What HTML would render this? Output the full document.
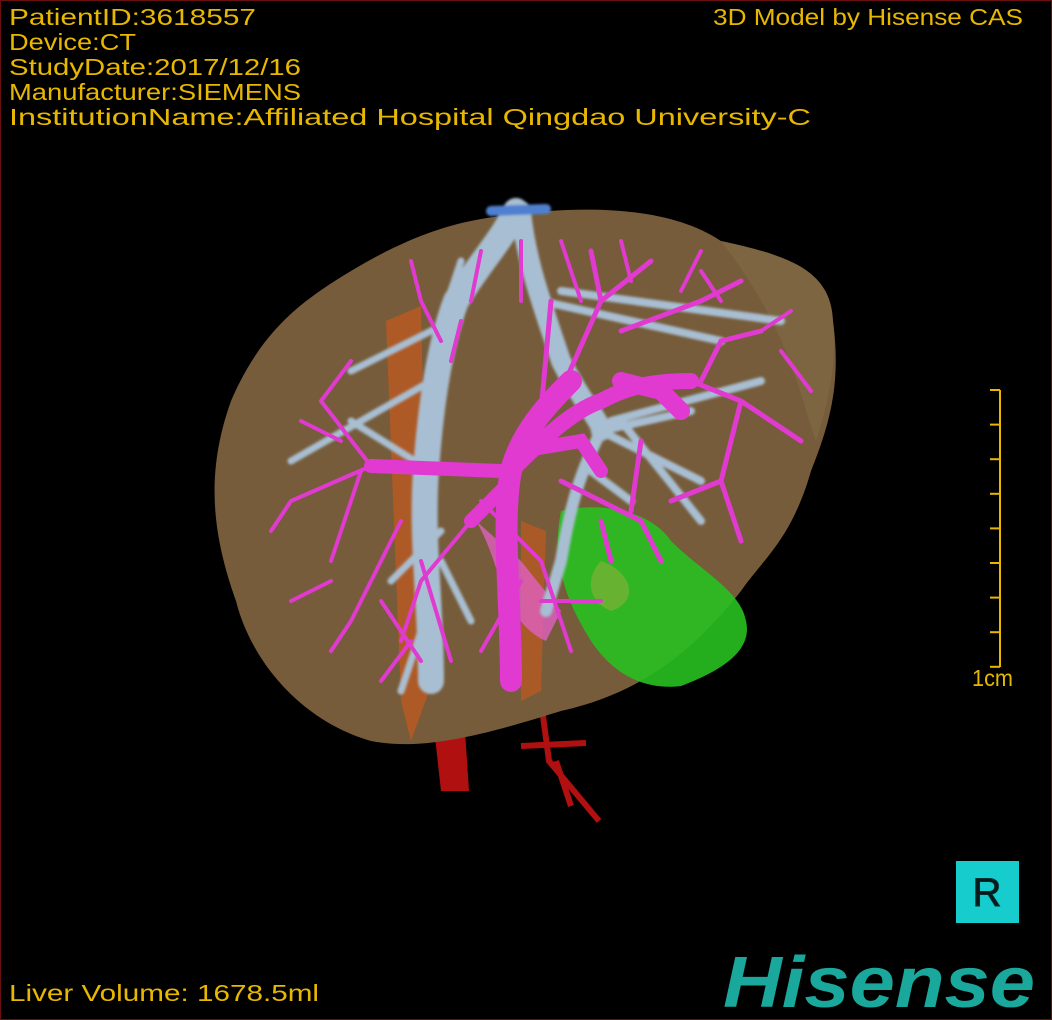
<!DOCTYPE html>
<html><head><meta charset="utf-8"><style>
html,body{margin:0;padding:0;background:#000;}
#f{position:relative;width:1052px;height:1020px;background:#000;overflow:hidden;box-sizing:border-box;border:1px solid #6a1010;}
svg{position:absolute;left:0;top:0;}
.t{font-family:"Liberation Sans",sans-serif;font-size:23px;fill:#e8b800;}
</style></head><body><div id="f">
<svg width="1052" height="1020" viewBox="0 0 1052 1020">
<defs><filter id="b"><feGaussianBlur stdDeviation="1.2"/></filter></defs>
<path d="M430 700 L440 790 L468 790 L462 700 Z" fill="#b01010"/>
<path d="M540 700 L548 760 L598 820 M520 745 L585 742 M555 760 L570 805" stroke="#b01010" stroke-width="6" fill="none"/>
<path d="M480 218 C560 205 660 200 720 240 C790 255 830 270 832 320 C840 380 830 420 810 470 C790 540 760 560 740 590 C700 640 650 690 560 710 C480 735 420 750 370 740 C300 720 250 660 235 600 C210 530 205 470 230 400 C260 330 300 300 350 270 C400 240 440 225 480 218 Z" fill="#765c3a"/>
<path d="M720 240 C790 255 830 270 832 320 C836 360 828 400 815 440 C800 400 790 330 720 240Z" fill="#846a48" opacity=".6"/>
<path d="M385 320 L420 305 L428 690 L410 740 L400 700 Z" fill="#c05a20" opacity=".75"/>
<path d="M520 520 L545 530 L540 690 L520 700 Z" fill="#c05a20" opacity=".7"/>
<path d="M475 520 C500 560 500 620 545 640 L560 610 L520 560 Z" fill="#e060c0" opacity=".8"/>
<path d="M560 510 C600 500 650 510 670 540 C700 570 740 590 745 620 C752 650 720 670 680 685 C640 690 610 670 590 640 C565 600 550 560 560 510Z" fill="#28c020" opacity=".9"/>
<path d="M600 560 C630 570 640 600 610 610 C585 600 585 575 600 560Z" fill="#a0b040" opacity=".5"/>
<g stroke="#a8bed2" fill="none" stroke-linecap="round" filter="url(#b)">
<path d="M515 210 C500 240 480 260 455 300 C440 340 430 400 425 470 C420 540 430 600 430 680" stroke-width="26"/>
<path d="M520 210 C525 260 540 300 560 360 C580 400 600 420 600 430" stroke-width="20"/>
<path d="M600 430 C580 470 570 500 560 560 L545 610" stroke-width="12"/>
<path d="M600 430 L700 480 M600 430 L690 410 M610 420 L760 380 M560 290 L780 320 M540 300 L720 340 M620 420 L700 520 M590 470 L630 500" stroke-width="8"/>
<path d="M450 320 L350 370 M430 380 L290 460 M430 470 L350 420 M440 530 L390 580 M430 600 L400 690 M440 560 L470 620 M450 290 L460 260" stroke-width="7"/>
<path d="M490 210 L545 208" stroke="#5080d0" stroke-width="10"/>
</g>
<g stroke="#e03ad0" fill="none" stroke-linecap="round">
<path d="M510 680 C510 600 500 520 510 470 C520 430 550 400 570 380" stroke-width="22"/>
<path d="M510 470 C540 440 570 410 600 400 C620 390 640 380 690 380" stroke-width="16"/>
<path d="M500 470 L370 465 M510 480 L470 520 M520 450 L580 440 L600 470" stroke-width="14"/>
<path d="M540 410 L550 300 M560 390 L600 300 L590 250 M600 300 L650 260 M620 330 L700 300 L740 280 M690 380 L740 400 L800 440 M700 380 L720 340 L760 330 M740 400 L720 480 L740 540 M720 480 L670 500 M560 480 L640 520 L660 560 M640 440 L630 510 M600 520 L610 560" stroke-width="5"/>
<path d="M370 465 L320 400 L350 360 M370 465 L290 500 L270 530 M360 470 L330 560 M400 520 L350 620 L330 650 M420 560 L450 660 M470 520 L420 580 L400 640 M480 500 L540 560 L560 620 M520 580 L480 650 M540 560 L570 650 M440 340 L420 300 L410 260 M450 360 L460 320 M470 300 L480 250 M520 300 L520 240 M560 240 L580 300 M630 280 L620 240 M680 290 L700 250 M760 330 L790 310 M780 350 L810 390 M720 300 L700 270 M300 420 L340 440 M330 580 L290 600 M380 600 L420 660 M410 640 L380 680 M600 600 L540 600" stroke-width="4"/>
<path d="M620 380 L660 390 L680 410" stroke-width="18"/>
</g>
<g stroke="#e8b800" stroke-width="2">
<line x1="999" y1="389" x2="999" y2="666"/>
<line x1="989" y1="389" x2="999" y2="389"/><line x1="989" y1="423.6" x2="999" y2="423.6"/>
<line x1="989" y1="458.2" x2="999" y2="458.2"/><line x1="989" y1="492.8" x2="999" y2="492.8"/>
<line x1="989" y1="527.4" x2="999" y2="527.4"/><line x1="989" y1="562" x2="999" y2="562"/>
<line x1="989" y1="596.6" x2="999" y2="596.6"/><line x1="989" y1="631.2" x2="999" y2="631.2"/>
<line x1="989" y1="665.8" x2="999" y2="665.8"/>
</g>
<text class="t" x="8" y="24" textLength="247" lengthAdjust="spacingAndGlyphs">PatientID:3618557</text>
<text class="t" x="8" y="49" textLength="127" lengthAdjust="spacingAndGlyphs">Device:CT</text>
<text class="t" x="8" y="74" textLength="292" lengthAdjust="spacingAndGlyphs">StudyDate:2017/12/16</text>
<text class="t" x="8" y="99" textLength="292" lengthAdjust="spacingAndGlyphs">Manufacturer:SIEMENS</text>
<text class="t" x="8" y="124" textLength="802" lengthAdjust="spacingAndGlyphs">InstitutionName:Affiliated Hospital Qingdao University-C</text>
<text class="t" x="712" y="24" textLength="310" lengthAdjust="spacingAndGlyphs">3D Model by Hisense CAS</text>
<text class="t" x="971" y="685" textLength="41" lengthAdjust="spacingAndGlyphs">1cm</text>
<text class="t" x="8" y="1000" textLength="310" lengthAdjust="spacingAndGlyphs">Liver Volume: 1678.5ml</text>
<rect x="955" y="860" width="63" height="62" fill="#16cccc"/>
<text x="986" y="905" text-anchor="middle" font-family="Liberation Sans,sans-serif" font-size="40" fill="#0a1a1a" stroke="#003030" stroke-width="1">R</text>
<text x="1034" y="1006" text-anchor="end" font-family="Liberation Sans,sans-serif" font-weight="bold" font-style="italic" font-size="72" fill="#1aa89c" textLength="312" lengthAdjust="spacingAndGlyphs">Hisense</text>
</svg>
</div></body></html>
